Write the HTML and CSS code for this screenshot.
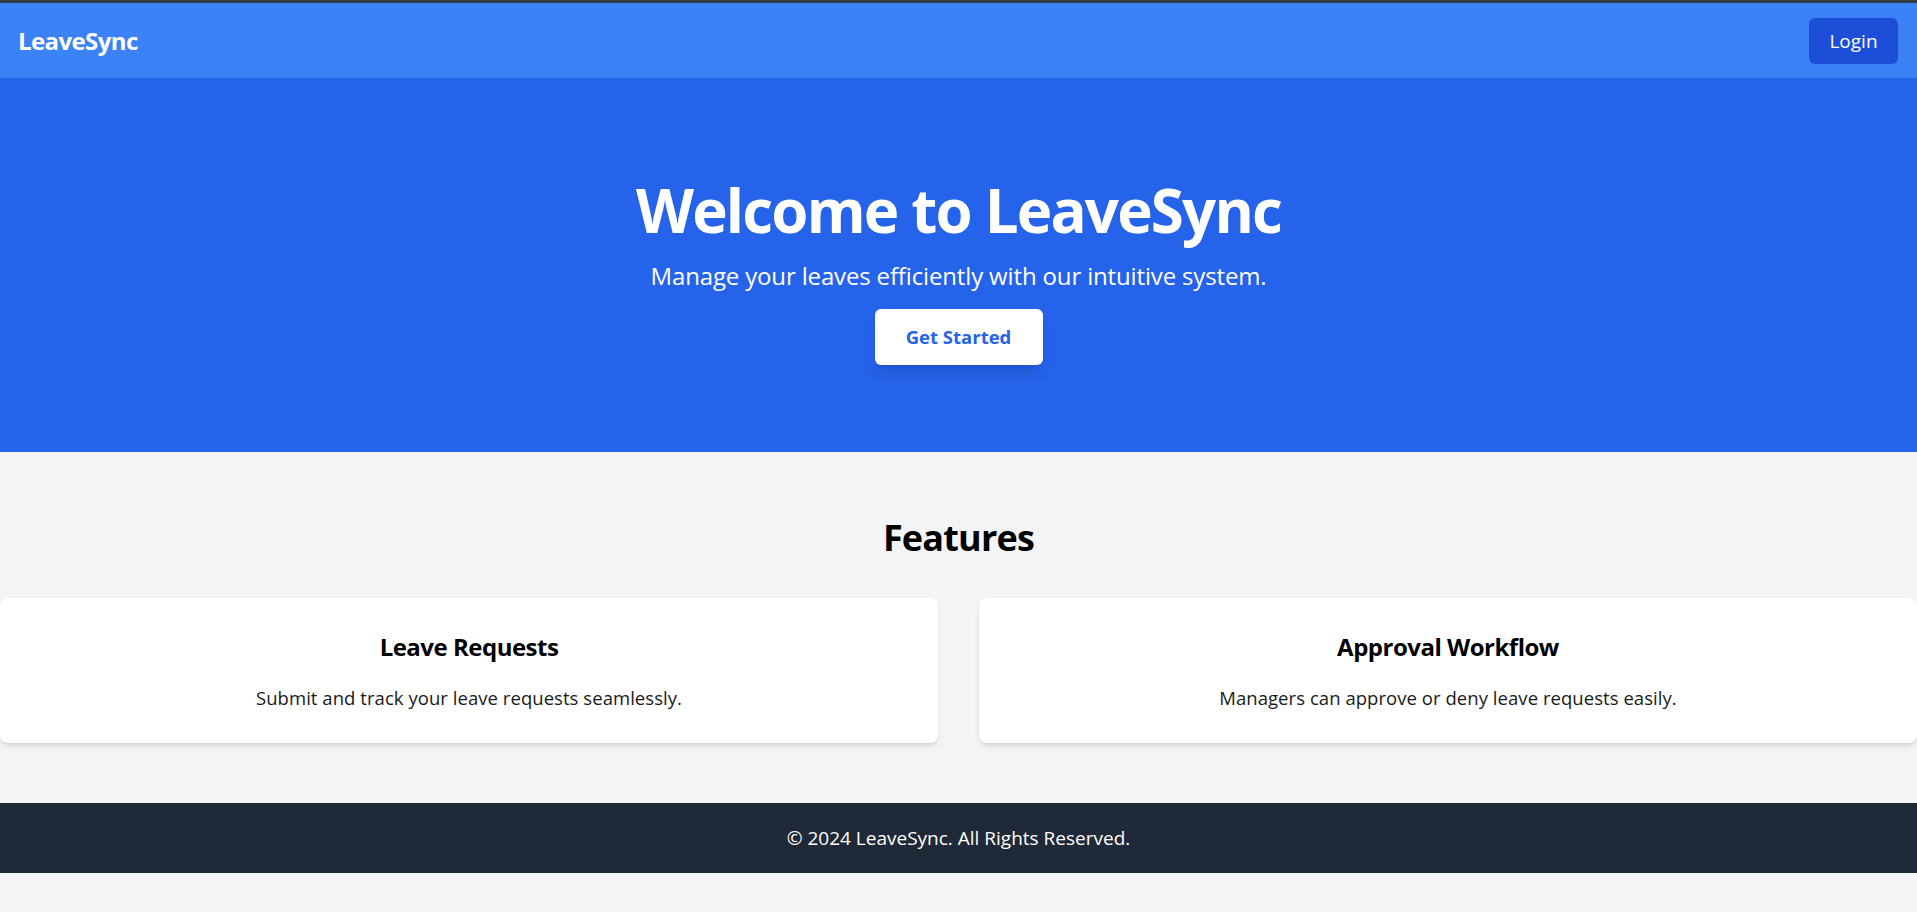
FILE: index.html
```html
<!DOCTYPE html>
<html lang="en">
<head>
<meta charset="utf-8">
<title>LeaveSync</title>
<link rel="stylesheet" href="styles.css">
</head>
<body>
<header class="navbar">
  <div class="logo">LeaveSync</div>
  <button class="login-btn">Login</button>
</header>
<section class="hero">
  <h1 class="hero-title">Welcome to LeaveSync</h1>
  <p class="hero-sub">Manage your leaves efficiently with our intuitive system.</p>
  <button class="start-btn">Get Started</button>
</section>
<section class="features">
  <h2 class="features-title">Features</h2>
  <div class="feature-grid">
    <div class="card">
      <h3 class="card-title">Leave Requests</h3>
      <p class="card-text">Submit and track your leave requests seamlessly.</p>
    </div>
    <div class="card">
      <h3 class="card-title">Approval Workflow</h3>
      <p class="card-text">Managers can approve or deny leave requests easily.</p>
    </div>
  </div>
</section>
<footer class="footer">
  <p class="footer-text">© 2024 LeaveSync. All Rights Reserved.</p>
</footer>
</body>
</html>
```

FILE: styles.css
```css
* { box-sizing: border-box; }
html, body { margin: 0; padding: 0; }
body {
  background: #f3f4f6;
  font-family: "Open Sans", "Noto Sans", sans-serif;
  color: #111;
}
.navbar {
  display: flex;
  align-items: center;
  justify-content: space-between;
  height: 78px;
  border-top: 3px solid #343a44;
  background: #3b82f6;
  padding: 0 19px 0 18px;
}
.logo {
  color: #fff;
  font-size: 24px;
  line-height: 32px;
  font-weight: 700;
  letter-spacing: -0.6px;
}
.login-btn {
  font-family: inherit;
  background: #1d4ed8;
  color: #fff;
  border: 0;
  border-radius: 6px;
  font-size: 19px;
  line-height: 28px;
  padding: 9px 20px;
  width: 89px;
  height: 46px;
  cursor: pointer;
}
.hero {
  background: #2563eb;
  color: #fff;
  text-align: center;
  padding: 102px 16px 87px;
  display: flex;
  flex-direction: column;
  align-items: center;
}
.hero-title {
  margin: 0 0 20px;
  font-size: 60px;
  line-height: 60px;
  font-weight: 700;
  letter-spacing: -1.8px;
}
.hero-sub {
  margin: 0 0 17px;
  font-size: 24px;
  line-height: 32px;
  letter-spacing: -0.15px;
}
.start-btn {
  font-family: inherit;
  background: #fff;
  color: #2563eb;
  border: 0;
  border-radius: 6px;
  font-size: 18.5px;
  font-weight: 700;
  line-height: 28px;
  padding: 14px 0;
  width: 168px;
  height: 56px;
  box-shadow: 0 10px 15px -3px rgba(0,0,0,0.12), 0 4px 6px -4px rgba(0,0,0,0.1);
  cursor: pointer;
}
.features {
  padding: 66px 0 60px;
  text-align: center;
}
.features-title {
  margin: 0 0 40px;
  font-size: 36px;
  line-height: 40px;
  font-weight: 700;
  letter-spacing: -0.8px;
  color: #000;
}
.feature-grid {
  display: grid;
  grid-template-columns: 1fr 1fr;
  gap: 41px;
}
.card {
  background: #fff;
  border-radius: 8px;
  padding: 33px 32px 31px;
  box-shadow: 0 4px 6px -1px rgba(0,0,0,0.1), 0 2px 4px -2px rgba(0,0,0,0.1);
}
.card-title {
  margin: 0 0 21px;
  font-size: 24px;
  line-height: 32px;
  font-weight: 700;
  letter-spacing: -0.5px;
  color: #000;
}
.card-text {
  margin: 0;
  font-size: 18.5px;
  line-height: 28px;
  letter-spacing: 0.05px;
  color: #1a1a1a;
}
.footer {
  background: #1f2937;
  color: #fff;
  text-align: center;
  padding: 21px 16px;
}
.footer-text {
  margin: 0;
  font-size: 19px;
  line-height: 28px;
  letter-spacing: 0;
}
```
